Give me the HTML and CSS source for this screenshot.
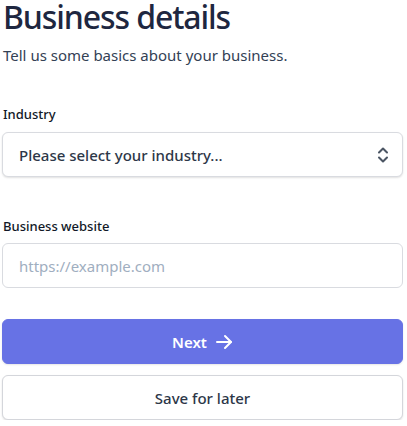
FILE: index.html
```html
<!DOCTYPE html>
<html lang="en">
<head>
<meta charset="utf-8">
<link rel="stylesheet" href="styles.css">
</head>
<body>
<main class="form">
  <h1 class="title">Business details</h1>
  <p class="subtitle">Tell us some basics about your business.</p>

  <div class="field field-industry">
    <label class="label">Industry</label>
    <div class="select">
      <span class="select-text">Please select your industry...</span>
      <svg class="chev" width="14" height="20" viewBox="0 0 14 20" fill="none" stroke="#4b5563" stroke-width="2" stroke-linecap="round" stroke-linejoin="round">
        <path d="M3 7.5 L7 3.5 L11 7.5"/>
        <path d="M3 12.5 L7 16.5 L11 12.5"/>
      </svg>
    </div>
  </div>

  <div class="field field-website">
    <label class="label">Business website</label>
    <div class="input"><span class="placeholder">https://example.com</span></div>
  </div>

  <div class="actions">
    <button class="btn btn-primary">Next
      <svg class="arrow" width="18" height="16" viewBox="0 0 18 16" fill="none" stroke="#ffffff" stroke-width="2" stroke-linecap="round" stroke-linejoin="round">
        <path d="M2 8 H16"/><path d="M10 2 L16 8 L10 14"/>
      </svg>
    </button>
    <button class="btn btn-secondary">Save for later</button>
  </div>
</main>
</body>
</html>
```
FILE: styles.css
```css
* { box-sizing: border-box; }
body {
  margin: 0;
  background: #ffffff;
  font-family: "Noto Sans", "Open Sans", sans-serif;
  color: #1f2937;
}
.form {
  padding: 0 4px 0 2px;
  display: flex;
  flex-direction: column;
}
.title {
  margin: 0;
  font-family: "Noto Sans", sans-serif;
  font-size: 32px;
  line-height: 34px;
  font-weight: 500;
  letter-spacing: -1.1px;
  color: #1e2740;
  padding-left: 1px;
}
.subtitle {
  margin: 11px 0 0 0;
  font-size: 15px;
  line-height: 20px;
  color: #334155;
  padding-left: 1px;
}
.field { display: flex; flex-direction: column; }
.field-industry { margin-top: 41px; }
.field-website { margin-top: 41px; }
.label {
  font-size: 13px;
  line-height: 16px;
  font-weight: 500;
  color: #111827;
  padding-left: 1px;
  margin-bottom: 9px;
}
.field-industry .label { margin-bottom: 10px; }
.select, .input {
  height: 45px;
  border: 1px solid #d9dbe0;
  border-radius: 6px;
  background: #fff;
  display: flex;
  align-items: center;
  padding: 0 12px 0 16px;
}
.select { box-shadow: 0 1px 2px rgba(0,0,0,0.12); justify-content: space-between; }
.select-text { font-size: 15px; font-weight: 500; color: #2d3748; }
.chev { display: block; }
.placeholder { font-size: 15px; color: #a0aec0; }
.actions {
  margin-top: 31px;
  display: flex;
  flex-direction: column;
  gap: 11px;
}
.btn {
  height: 45px;
  border-radius: 6px;
  font-family: inherit;
  font-size: 15px;
  display: flex;
  align-items: center;
  justify-content: center;
  gap: 8px;
  cursor: pointer;
}
.btn-primary {
  background: #6772e5;
  border: 1px solid #6772e5;
  color: #fff;
  font-weight: 600;
  box-shadow: 0 1px 2px rgba(0,0,0,0.1);
}
.btn-secondary {
  background: #fff;
  border: 1px solid #d4d6db;
  color: #2d3748;
  font-weight: 500;
  box-shadow: 0 1px 2px rgba(0,0,0,0.12);
}
```
